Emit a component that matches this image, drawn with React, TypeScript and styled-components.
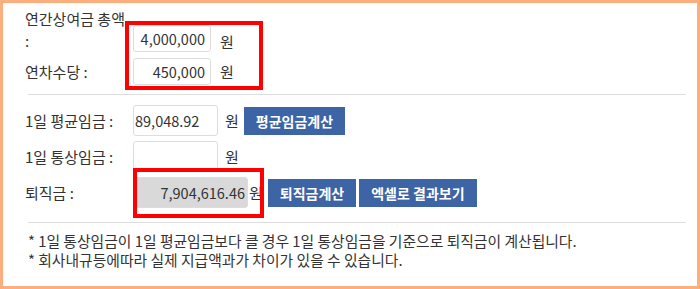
import styled, { createGlobalStyle } from "styled-components";

const GlobalStyle = createGlobalStyle`
  html, body {
    margin: 0;
    padding: 0;
    background: #ffffff;
  }
  * {
    box-sizing: border-box;
  }
`;

const Panel = styled.div`
  position: relative;
  width: 700px;
  height: 289px;
  border: 3px solid #fcae7e;
  padding: 5px 14px 0 22px;
  background-color: #ffffff;
  font-family: "Noto Sans CJK KR", "Noto Sans", sans-serif;
  color: #333333;
`;

const Section = styled.div`
  display: flex;
  flex-direction: column;
  gap: ${(p: { $gap: number }) => p.$gap}px;
`;

const Row = styled.div<{ $align?: string }>`
  display: flex;
  align-items: ${(p) => p.$align || "center"};
`;

const Label = styled.div`
  width: 108px;
  flex-shrink: 0;
  font-size: 15px;
  line-height: 22px;
  padding-right: 4px;
`;

const Input = styled.input<{ $w: number; $h: number; $left?: boolean; $grey?: boolean }>`
  width: ${(p) => p.$w}px;
  height: ${(p) => p.$h}px;
  border: 1px solid #dddddd;
  border-radius: 3px;
  padding: 0 ${(p) => (p.$left ? 1 : p.$grey ? 2 : 5)}px;
  font-family: "Noto Sans CJK KR", "Noto Sans", sans-serif;
  font-size: 14.5px;
  color: #333333;
  text-align: ${(p) => (p.$left ? "left" : "right")};
  background-color: ${(p) => (p.$grey ? "#d9d9d9" : "#ffffff")};
  outline: none;
`;

const Won = styled.span<{ $gap: number }>`
  font-size: 15px;
  margin-left: ${(p) => p.$gap}px;
  margin-right: 2px;
`;

const Button = styled.button`
  height: 28px;
  padding: 0 12px;
  margin-left: 3px;
  border: none;
  border-radius: 0;
  background-color: #3d64a4;
  color: #ffffff;
  font-family: "Noto Sans CJK KR", "Noto Sans", sans-serif;
  font-size: 14px;
  font-weight: 700;
  cursor: pointer;
`;

const Divider = styled.hr<{ $top: number; $bottom: number }>`
  border: none;
  height: 1px;
  background-color: #dddddd;
  margin: ${(p) => p.$top}px 0 ${(p) => p.$bottom}px 3px;
  width: 658px;
`;

const Notes = styled.ul`
  list-style: none;
  margin: 0;
  padding: 0 0 0 3px;
  font-size: 14.8px;
  line-height: 19px;
  color: #333333;
`;

const Highlight = styled.div<{ $x: number; $y: number; $w: number; $h: number }>`
  position: absolute;
  left: ${(p) => p.$x}px;
  top: ${(p) => p.$y}px;
  width: ${(p) => p.$w}px;
  height: ${(p) => p.$h}px;
  border: 4px solid #ff0000;
  pointer-events: none;
`;

const App = () => {
  return (
    <>
      <GlobalStyle />
      <Panel>
        <Section $gap={6}>
          <Row $align="flex-end">
            <Label>
              연간상여금 총액
              <br />:
            </Label>
            <Input $w={78} $h={27} defaultValue="4,000,000" />
            <Won $gap={9}>원</Won>
          </Row>
          <Row>
            <Label>연차수당 :</Label>
            <Input $w={78} $h={27} defaultValue="450,000" />
            <Won $gap={9}>원</Won>
          </Row>
        </Section>
        <Divider $top={9} $bottom={10} />
        <Section $gap={5}>
          <Row>
            <Label>1일 평균임금 :</Label>
            <Input $w={85} $h={31} $left defaultValue="89,048.92" />
            <Won $gap={7}>원</Won>
            <Button>평균임금계산</Button>
          </Row>
          <Row>
            <Label>1일 통상임금 :</Label>
            <Input $w={85} $h={31} $left defaultValue="" />
            <Won $gap={7}>원</Won>
          </Row>
          <Row>
            <Label>퇴직금 :</Label>
            <Input $w={115} $h={31} $grey readOnly defaultValue="7,904,616.46" />
            <Won $gap={1}>원</Won>
            <Button>퇴직금계산</Button>
            <Button>엑셀로 결과보기</Button>
          </Row>
        </Section>
        <Divider $top={14} $bottom={8} />
        <Notes>
          <li>* 1일 통상임금이 1일 평균임금보다 클 경우 1일 통상임금을 기준으로 퇴직금이 계산됩니다.</li>
          <li>* 회사내규등에따라 실제 지급액과가 차이가 있을 수 있습니다.</li>
        </Notes>
        <Highlight $x={122} $y={18} $w={138} $h={69} />
        <Highlight $x={130} $y={165} $w={131} $h={50} />
      </Panel>
    </>
  );
};

export default App;
